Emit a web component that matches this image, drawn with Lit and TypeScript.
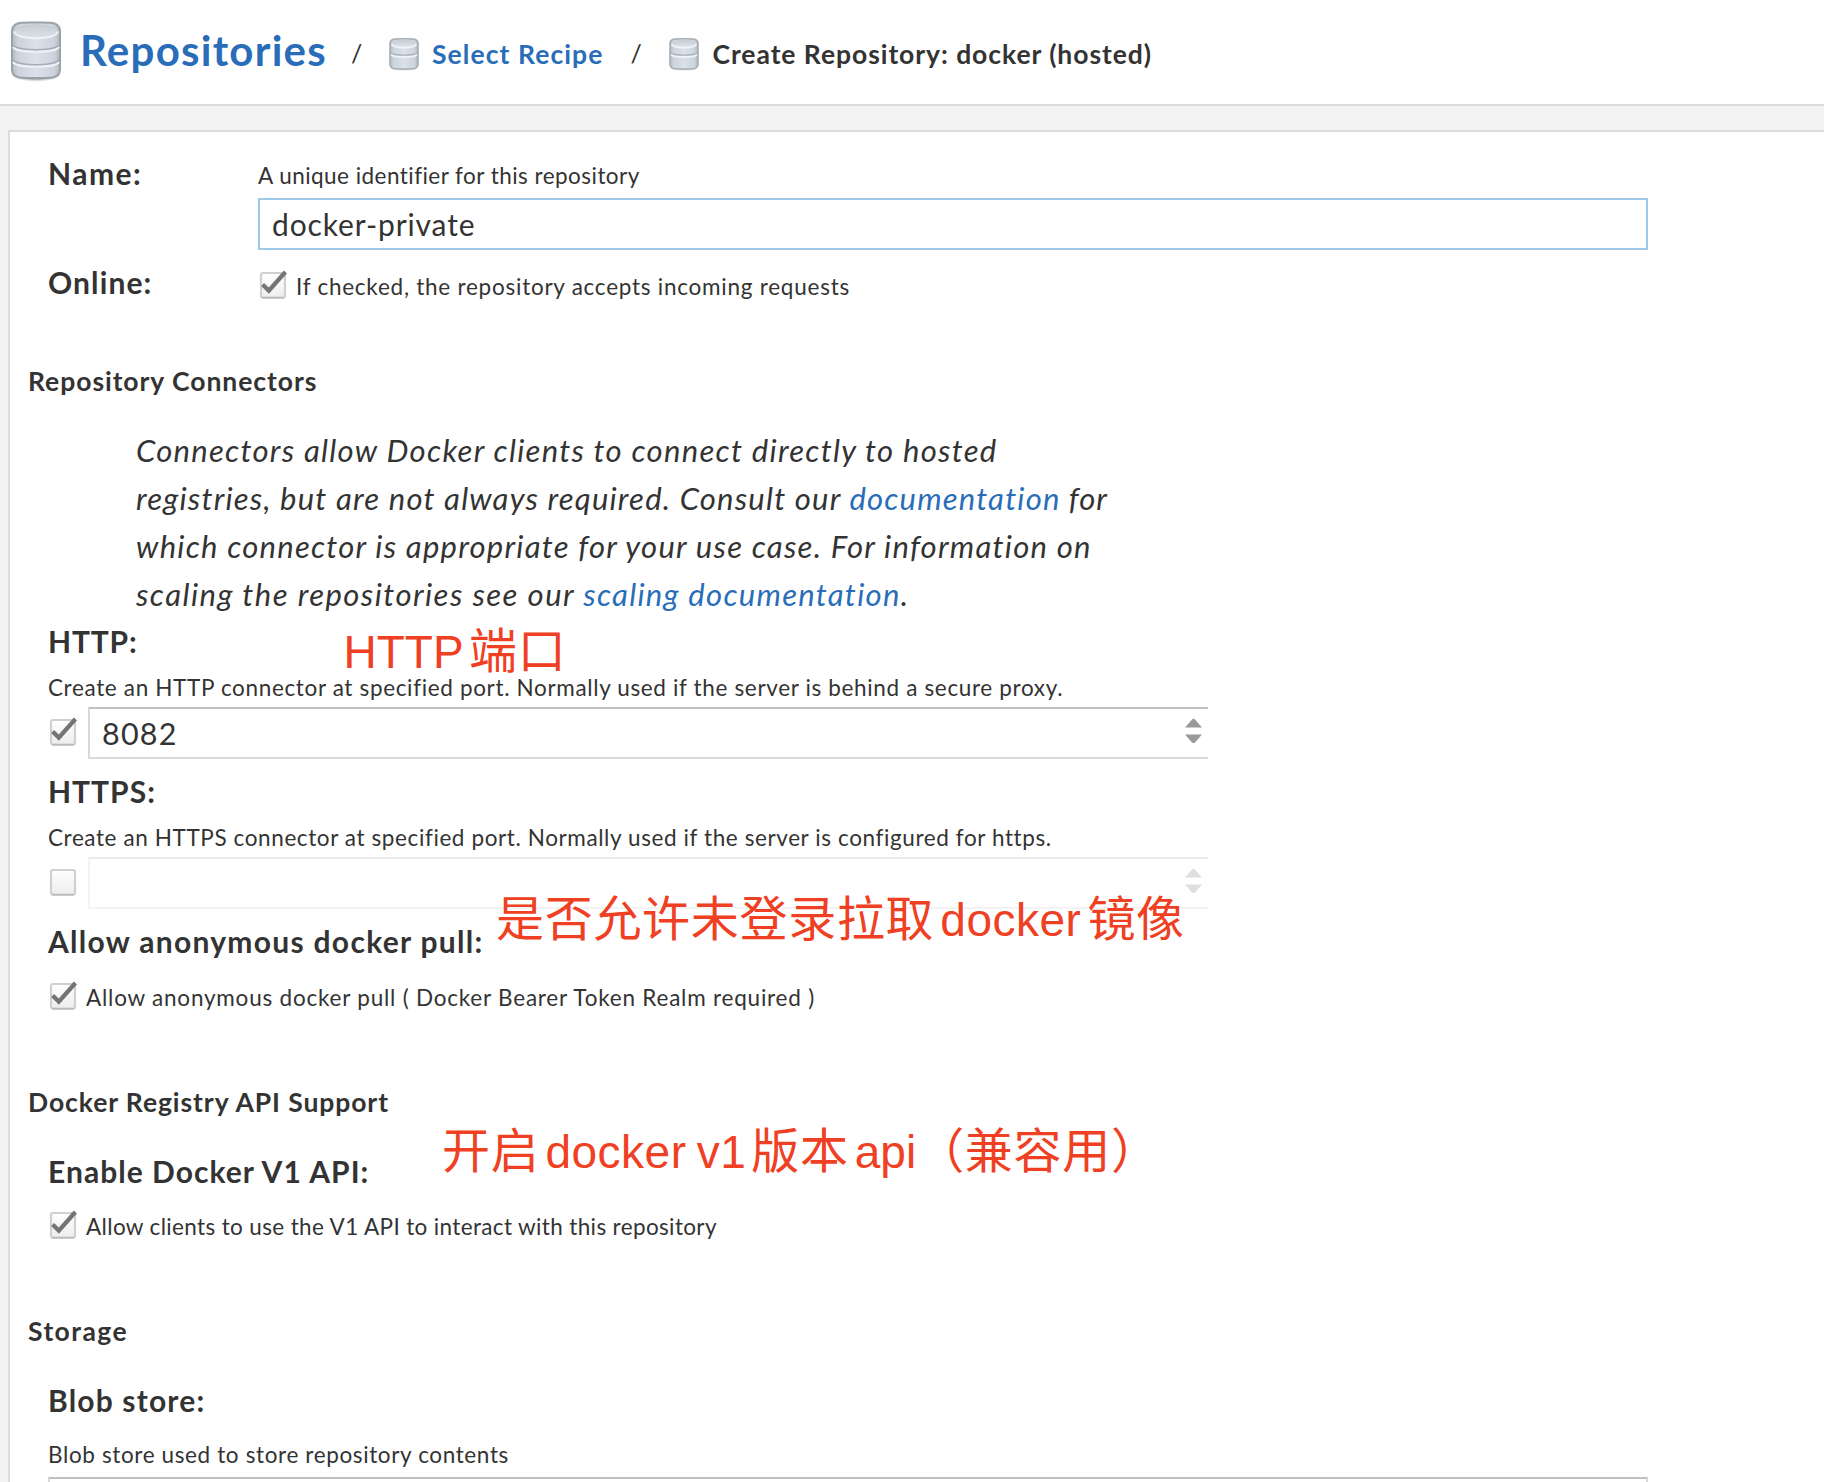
import { LitElement, html, css, svg, nothing } from "lit";
import { customElement, property } from "lit/decorators.js";

/** Single run of text with its own tracking. */
@customElement("ui-text")
class UiText extends LitElement {
  static styles = css`
    :host { display: inline; }
    .run { white-space: pre; }
  `;
  @property() text = "";
  @property({ type: Number }) tracking = 0;
  render() {
    return html`<span class="run" style="letter-spacing:${this.tracking}px">${this.text}</span>`;
  }
}

@customElement("db-icon")
class DbIcon extends LitElement {
  static styles = css`
    :host { display: block; flex: none; }
    svg { display: block; }
  `;
  @property({ type: Boolean }) large = false;
  render() {
    const defs = svg`<defs>
      <linearGradient id="body" x1="0" x2="1" y1="0" y2="0">
        <stop offset="0" stop-color="#b3bcc5"/><stop offset=".12" stop-color="#ccd3dc"/>
        <stop offset=".5" stop-color="#dbe1ea"/><stop offset=".88" stop-color="#ccd3dc"/>
        <stop offset="1" stop-color="#aeb7bf"/>
      </linearGradient>
      <linearGradient id="lid" x1="0" x2="0" y1="0" y2="1">
        <stop offset="0" stop-color="#c3ccd2"/><stop offset="1" stop-color="#dbe1e6"/>
      </linearGradient>
      <filter id="soft" x="-20%" y="-20%" width="140%" height="140%">
        <feGaussianBlur stdDeviation="1.2"/>
      </filter>
    </defs>`;
    if (this.large) {
      return html`<svg width="54" height="64" viewBox="0 0 54 64">
        ${defs}
        <path d="M4 12 V53 C4 62 50 62 50 53 V12Z" fill="#5d666c" opacity=".8" filter="url(#soft)"/>
        <path d="M3 12 C3 1 14 2.6 27 2.6 C40 2.6 51 1 51 12 V49 C51 59.5 40 58 27 58 C14 58 3 59.5 3 49Z" fill="url(#body)" stroke="#98a2a8" stroke-width="2"/>
        <ellipse cx="27" cy="10.8" rx="21.8" ry="6.8" fill="url(#lid)"/>
        <path d="M5 11.5 C6 20.5 48 20.5 49 11.5" fill="none" stroke="#eef2f6" stroke-width="2"/>
        <path d="M4 25 C7 31.5 47 31.5 50 25 M4 40 C7 46.5 47 46.5 50 40" fill="none" stroke="#a3adb5" stroke-width="1.8"/>
        <path d="M4 27 C7 33.3 47 33.3 50 27 M4 42 C7 48.3 47 48.3 50 42" fill="none" stroke="#edf1f6" stroke-width="2"/>
      </svg>`;
    }
    return html`<svg width="32" height="34" viewBox="0 0 32 34">
      ${defs}
      <path d="M3 7 V28 C3 34 29 34 29 28 V7Z" fill="#7f8991" opacity=".7" filter="url(#soft)"/>
      <path d="M2 7 C2 1 8 1.8 16 1.8 C24 1.8 30 1 30 7 V27 C30 32.6 24 32 16 32 C8 32 2 32.6 2 27Z" fill="url(#body)" stroke="#a6afb5" stroke-width="1.6"/>
      <ellipse cx="16" cy="6.2" rx="12" ry="3.6" fill="url(#lid)"/>
      <path d="M3.6 7 C5 11.8 27 11.8 28.4 7" fill="none" stroke="#f1f4f8" stroke-width="1.6"/>
      <path d="M3 16 C6 18.8 26 18.8 29 16" fill="none" stroke="#abb4bc" stroke-width="1.4"/>
      <path d="M3 17.8 C6 20.6 26 20.6 29 17.8" fill="none" stroke="#f1f4f8" stroke-width="1.6"/>
    </svg>`;
  }
}

@customElement("check-box")
class CheckBox extends LitElement {
  static styles = css`
    :host { display: block; flex: none; width: 30px; height: 30px; }
    svg { display: block; }
  `;
  @property({ type: Boolean }) checked = false;
  render() {
    return html`<svg width="30" height="30" viewBox="0 0 30 30">
      <defs>
        <linearGradient id="face" x1="0" x2="0" y1="0" y2="1">
          <stop offset="0" stop-color="#ffffff"/><stop offset="1" stop-color="#ededed"/>
        </linearGradient>
      </defs>
      <rect x="3" y="4" width="24" height="24.5" rx="2" fill="url(#face)" stroke="#d0d0d0" stroke-width="2.2"/>
      <path d="M4 28.8 H26" stroke="#bababa" stroke-width="1.6"/>
      ${this.checked
        ? svg`<path d="M4.6 15.6 L10.8 21.6 L27.4 3" fill="none" stroke="#747474" stroke-width="4.2"/>`
        : nothing}
    </svg>`;
  }
}

@customElement("number-field")
class NumberField extends LitElement {
  static styles = css`
    :host { display: block; width: 1120px; }
    .box {
      box-sizing: border-box; height: 52px; display: flex; align-items: center; justify-content: space-between;
      padding: 0 6px 0 12px; border: 2px solid #d9d9d9; border-top-color: #c0c0c0; border-right: 0; background: #fff;
    }
    .off { opacity: 0.3; }
    .value { font-size: 30.5px; line-height: 48px; }
    svg { display: block; margin-top: -4px; }
  `;
  @property() value = "";
  @property({ type: Boolean }) disabled = false;
  render() {
    return html`<div class="box ${this.disabled ? "off" : ""}">
      <span class="value"><ui-text .text=${this.value} .tracking=${1.2}></ui-text></span>
      <svg width="17" height="26" viewBox="0 0 17 26">
        <path d="M0 9.4 L7 1.4 Q8.5 0 10 1.4 L17 9.4Z M0 16.6 L7 24.4 Q8.5 25.8 10 24.4 L17 16.6Z" fill="#999"/>
      </svg>
    </div>`;
  }
}

const t = (text: string, tracking: number) => html`<ui-text .text=${text} .tracking=${tracking}></ui-text>`;

@customElement("app-root")
class AppRoot extends LitElement {
  static styles = css`
    :host {
      display: block; position: relative; height: 1482px; overflow: hidden; background: #f3f3f3; color: #333;
      font-family: "Lato", "Liberation Sans", sans-serif;
    }
    a { color: #296db9; text-decoration: none; }
    .header {
      box-sizing: border-box; height: 106px; display: flex; align-items: flex-start; padding: 0 8px;
      background: #fff; border-bottom: 2px solid #ddd;
    }
    .crumb { display: flex; margin-top: 34px; font-weight: 700; font-size: 26.5px; line-height: 41px; }
    .crumb-main { margin-top: 0; font-size: 42px; line-height: 101px; }
    .icon-main { margin: 20px 17px 0 1px; }
    .icon-small { margin: 3px 12px 0 0; }
    .slash { margin-top: 33px; font-size: 25px; line-height: 40px; width: 11px; }
    .slash-a { margin-left: 24px; margin-right: 26px; }
    .slash-b { margin-left: 27px; margin-right: 27px; }
    .panel {
      box-sizing: border-box; height: 1352px; margin: 24px 0 0 8px; padding: 21px 0 0 18px;
      background: #fff; border: 2px solid #ddd; border-right: 0; border-bottom: 0;
    }
    .fields { padding-left: 20px; }
    .row { display: grid; grid-template-columns: 210px 1390px; }
    .row-online { margin-top: 12px; }
    .label { font-size: 30px; line-height: 41px; font-weight: 700; height: 40px; }
    .help { font-size: 22.5px; line-height: 32px; height: 30px; }
    .help-name { margin-top: 7px; }
    .input {
      box-sizing: border-box; height: 52px; margin-top: 8px; padding-left: 12px; border: 2px solid #9fc9e9;
      font-size: 30px; line-height: 48px; background: #fff;
    }
    .check { display: flex; height: 30px; font-size: 22.5px; line-height: 32px; }
    .check check-box { margin-top: -2px; }
    .check .caption { padding-left: 8px; }
    .check-online { margin-top: 9px; }
    .section { font-size: 26.5px; line-height: 41px; height: 40px; font-weight: 700; }
    .gap-59 { margin-top: 59px; }
    .gap-70 { margin-top: 70px; }
    .gap-29 { margin-top: 29px; }
    .gap-21 { margin-top: 21px; }
    .gap-20 { margin-top: 20px; }
    .gap-19 { margin-top: 19px; }
    .gap-12 { margin-top: 12px; }
    .gap-11 { margin-top: 11px; }
    .note { margin: 25px 0 3px 108px; font-size: 31px; line-height: 48px; font-style: italic; }
    .note-line { height: 48px; white-space: nowrap; }
    .connector { display: flex; margin-top: 5px; height: 52px; }
    .connector check-box { margin: 9px 10px 0 0; }
    .select { box-sizing: border-box; width: 1600px; height: 52px; margin-top: 8px; border: 2px solid #d9d9d9; border-top-color: #c0c0c0; }
    .mark {
      position: absolute; display: flex; align-items: baseline; white-space: pre; color: #ef4023; line-height: 60px;
      font-family: "Liberation Sans", sans-serif; font-size: 46px;
    }
    .han { font-family: "Noto Sans CJK SC", sans-serif; font-size: 48px; letter-spacing: 0.7px; }
    .lead { margin-right: 5.5px; }
    .mid { margin: 0 6px; letter-spacing: 0.5px; }
    .mid-api { margin: 0 5px 0 6px; word-spacing: -3px; letter-spacing: 0.5px; }
    .tail { margin: 0 0 0 6px; }
    .mark-http { left: 343.5px; top: 617px; }
    .mark-anon { left: 496px; top: 885px; }
    .mark-api { left: 442px; top: 1117px; }
  `;

  render() {
    return html`
      <header class="header">
        <a class="crumb crumb-main"><db-icon class="icon-main" large></db-icon>${t("Repositories", 1.25)}</a>
        <span class="slash slash-a">/</span>
        <a class="crumb"><db-icon class="icon-small"></db-icon>${t("Select Recipe", 1.08)}</a>
        <span class="slash slash-b">/</span>
        <span class="crumb"><db-icon class="icon-small"></db-icon>${t("Create Repository: docker (hosted)", 0.94)}</span>
      </header>
      <main class="panel">
        <div class="fields">
          <div class="row">
            <div class="label">${t("Name:", 1.5)}</div>
            <div>
              <div class="help help-name">${t("A unique identifier for this repository", 0.46)}</div>
              <div class="input">${t("docker-private", 0.88)}</div>
            </div>
          </div>
          <div class="row row-online">
            <div class="label">${t("Online:", 1.1)}</div>
            <div class="check check-online">
              <check-box checked></check-box>
              <span class="caption">${t("If checked, the repository accepts incoming requests", 0.75)}</span>
            </div>
          </div>
        </div>

        <div class="section gap-59">${t("Repository Connectors", 0.95)}</div>
        <div class="note">
          <div class="note-line">${t("Connectors allow Docker clients to connect directly to hosted", 1.3)}</div>
          <div class="note-line">${t("registries, but are not always required. Consult our ", 1.21)}<a>${t("documentation", 1.19)}</a>${t(" for", 1)}</div>
          <div class="note-line">${t("which connector is appropriate for your use case. For information on", 1.25)}</div>
          <div class="note-line">${t("scaling the repositories see our ", 1.46)}<a>${t("scaling documentation", 1.28)}</a>.</div>
        </div>
        <div class="fields">
          <div class="label">${t("HTTP:", 0.8)}</div>
          <div class="help gap-11">${t("Create an HTTP connector at specified port. Normally used if the server is behind a secure proxy.", 0.65)}</div>
          <div class="connector"><check-box checked></check-box><number-field value="8082"></number-field></div>
          <div class="label gap-12">${t("HTTPS:", 1)}</div>
          <div class="help gap-11">${t("Create an HTTPS connector at specified port. Normally used if the server is configured for https.", 0.6)}</div>
          <div class="connector"><check-box></check-box><number-field disabled></number-field></div>
          <div class="label gap-12">${t("Allow anonymous docker pull:", 1.29)}</div>
          <div class="check gap-21">
            <check-box checked></check-box>
            <span class="caption">${t("Allow anonymous docker pull ( Docker Bearer Token Realm required )", 0.78)}</span>
          </div>
        </div>

        <div class="section gap-70">${t("Docker Registry API Support", 0.92)}</div>
        <div class="fields">
          <div class="label gap-29">${t("Enable Docker V1 API:", 1.03)}</div>
          <div class="check gap-20">
            <check-box checked></check-box>
            <span class="caption">${t("Allow clients to use the V1 API to interact with this repository", 0.36)}</span>
          </div>
        </div>

        <div class="section gap-70">${t("Storage", 1.45)}</div>
        <div class="fields">
          <div class="label gap-29">${t("Blob store:", 1.17)}</div>
          <div class="help gap-19">${t("Blob store used to store repository contents", 0.63)}</div>
          <div class="select"></div>
        </div>
      </main>

      <div class="mark mark-http"><span class="lead">HTTP</span><span class="han">端口</span></div>
      <div class="mark mark-anon">
        <span class="han">是否允许未登录拉取</span><span class="mid">docker</span><span class="han">镜像</span>
      </div>
      <div class="mark mark-api">
        <span class="han">开启</span><span class="mid-api">docker v1</span><span class="han">版本</span><span class="tail">api</span><span class="han">（兼容用）</span>
      </div>
    `;
  }
}
